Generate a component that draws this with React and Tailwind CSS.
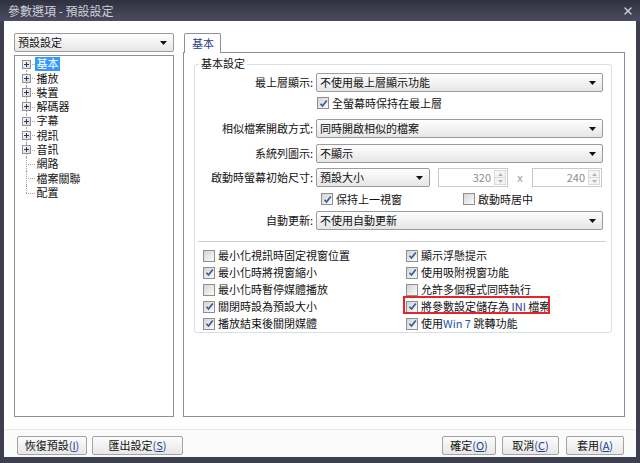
import { X } from 'lucide-react';

const treeItems = [
  { label: '基本', plus: true, selected: true },
  { label: '播放', plus: true },
  { label: '裝置', plus: true },
  { label: '解碼器', plus: true },
  { label: '字幕', plus: true },
  { label: '視訊', plus: true },
  { label: '音訊', plus: true },
  { label: '網路' },
  { label: '檔案關聯' },
  { label: '配置' },
];

const leftChecks = [
  { label: '最小化視訊時固定視窗位置', checked: false },
  { label: '最小化時將視窗縮小', checked: true },
  { label: '最小化時暫停媒體播放', checked: false },
  { label: '關閉時設為預設大小', checked: true },
  { label: '播放結束後關閉媒體', checked: true },
];

function Arrow() {
  return (
    <svg width="7" height="4" viewBox="0 0 7 4" className="shrink-0">
      <polygon points="0,0 7,0 3.5,4" fill="#111" />
    </svg>
  );
}

function Dropdown({ text, className = '' }) {
  return (
    <div className={`h-[19px] border border-[#9b9b9b] rounded-[2px] bg-linear-to-b from-[#fefefe] to-[#e6e6e6] flex items-center justify-between pl-[3px] pr-[6px] ${className}`}>
      <span className="leading-none">{text}</span>
      <Arrow />
    </div>
  );
}

function Checkbox({ checked }) {
  return (
    <span className="w-[12px] h-[12px] shrink-0 border border-[#8e8f8f] bg-linear-to-br from-[#d4d4d4] to-[#fbfbfb] flex items-center justify-center">
      {checked && (
        <svg width="9" height="9" viewBox="0 0 9 9">
          <path d="M1.5 4.8 L3.5 7 L7.8 1.5" fill="none" stroke="#3a5a96" strokeWidth="1.7" />
        </svg>
      )}
    </span>
  );
}

function Check({ checked, children, className = '' }) {
  return (
    <div className={`flex items-center gap-[3px] ${className}`}>
      <Checkbox checked={checked} />
      <span className="leading-none whitespace-nowrap">{children}</span>
    </div>
  );
}

function SpinBox({ value }) {
  return (
    <div className="w-[70px] h-[19px] border border-[#c9c9c9] bg-white flex items-stretch">
      <span className="flex-1 text-right pr-[3px] text-[#8c8c8c] leading-[17px]">{value}</span>
      <div className="w-[12px] flex flex-col my-[1px] mr-[1px]">
        <div className="flex-1 border border-[#dadada] bg-[#f4f4f4] flex items-center justify-center">
          <svg width="5" height="3" viewBox="0 0 5 3"><polygon points="0,3 5,3 2.5,0" fill="#b5b5b5" /></svg>
        </div>
        <div className="flex-1 border border-t-0 border-[#dadada] bg-[#f4f4f4] flex items-center justify-center">
          <svg width="5" height="3" viewBox="0 0 5 3"><polygon points="0,0 5,0 2.5,3" fill="#b5b5b5" /></svg>
        </div>
      </div>
    </div>
  );
}

function Row({ label, children, className = '' }) {
  return (
    <div className={`flex items-center ${className}`}>
      <span className="w-[118px] text-right leading-none whitespace-nowrap">{label}</span>
      <div className="ml-[3px] flex-1 flex items-center">{children}</div>
    </div>
  );
}

function Button({ label, mn, className = '' }) {
  return (
    <button className={`h-[19px] border border-[#a3a3a3] rounded-[2px] bg-linear-to-b from-[#fcfcfc] to-[#e7e7e7] flex items-center justify-center leading-none ${className}`}>
      {label}
      <span className="text-[#1f3f8a]">
        (<span className="underline">{mn}</span>)
      </span>
    </button>
  );
}

function TreeRow({ item, index, last }) {
  return (
    <div className="h-[14.27px] flex items-center pl-[5px]">
      <div className="relative w-[15px] h-full">
        <div
          className={`absolute left-[6px] border-l border-dotted border-[#a5a5a5] ${
            index === 0 ? 'top-1/2 bottom-0' : last ? 'top-0 h-1/2' : 'top-0 bottom-0'
          }`}
        />
        <div className="absolute left-[6px] right-0 top-1/2 border-t border-dotted border-[#a5a5a5]" />
        {item.plus && (
          <div className="absolute left-[2px] top-[2.5px] w-[9px] h-[9px] border border-[#929292] bg-linear-to-br from-[#f8f8f8] to-[#d9d9d9] flex items-center justify-center">
            <svg width="5" height="5" viewBox="0 0 5 5">
              <path d="M0 2.5 H5 M2.5 0 V5" stroke="#1f3a70" strokeWidth="1" />
            </svg>
          </div>
        )}
      </div>
      <span
        className={`h-[13.5px] leading-[13.5px] px-[1.5px] whitespace-nowrap ${
          item.selected ? 'bg-[#3399ff] text-white' : 'text-[#111]'
        }`}
      >
        {item.label}
      </span>
    </div>
  );
}

export default function App() {
  return (
    <div className="w-[640px] h-[463px] flex flex-col bg-[#3d3f4e] text-[11px] text-[#111] font-['Noto_Sans_CJK_TC','Noto_Sans',sans-serif] select-none">
      {/* title bar */}
      <div className="h-[21px] shrink-0 flex items-center justify-between pl-[8px] pr-[6px] bg-linear-to-b from-[#2f3140] to-[#4b4d5f]">
        <span className="text-[12px] text-[#cfd0d8] leading-none">參數選項 - 預設設定</span>
        <X size={12} strokeWidth={3} className="text-[#c8c9d0]" />
      </div>

      {/* client */}
      <div className="flex-1 mx-[4px] mb-[6px] bg-white flex flex-col">
        <div className="flex pt-[12px] h-[396px]">
          {/* left column */}
          <div className="ml-[10px] w-[160px] flex flex-col">
            <Dropdown text="預設設定" />
            <div className="mt-[3px] flex-1 border border-[#8d9097] bg-white pt-[1px]">
              {treeItems.map((item, i) => (
                <TreeRow key={item.label} item={item} index={i} last={i === treeItems.length - 1} />
              ))}
            </div>
          </div>

          {/* right column */}
          <div className="ml-[9px] w-[442px] flex flex-col">
            <div className="flex">
              <div className="relative z-10 ml-[1px] -mb-px w-[37px] h-[20px] border border-b-0 border-[#8d9097] rounded-t-[2px] bg-white flex items-center pl-[7px] text-[#1f3f8a] leading-none">
                基本
              </div>
            </div>
            <div className="flex-1 border border-[#8d9097] bg-white">
              {/* group box */}
              <div className="relative mt-[11px] ml-[10px] w-[418px] h-[269px] border border-[#d5dfe5] rounded-[3px]">
                <span className="absolute -top-[7px] left-[4px] px-[2px] bg-white leading-none">基本設定</span>
                <div className="flex flex-col pt-[8px] pr-[8px]">
                  <Row label="最上層顯示:">
                    <Dropdown text="不使用最上層顯示功能" className="flex-1" />
                  </Row>
                  <div className="mt-[3px] h-[16px] flex items-center pl-[122px]">
                    <Check checked>全螢幕時保持在最上層</Check>
                  </div>
                  <Row label="相似檔案開啟方式:" className="mt-[8px]">
                    <Dropdown text="同時開啟相似的檔案" className="flex-1" />
                  </Row>
                  <Row label="系統列圖示:" className="mt-[6px]">
                    <Dropdown text="不顯示" className="flex-1" />
                  </Row>
                  <Row label="啟動時螢幕初始尺寸:" className="mt-[5px]">
                    <Dropdown text="預設大小" className="w-[114px]" />
                    <div className="ml-[8px]">
                      <SpinBox value="320" />
                    </div>
                    <span className="w-[24px] text-center text-[#9a9a9a] leading-none">x</span>
                    <SpinBox value="240" />
                  </Row>
                  <div className="mt-[4px] h-[16px] flex items-center pl-[126px]">
                    <Check checked className="w-[142px]">保持上一視窗</Check>
                    <Check checked={false}>啟動時居中</Check>
                  </div>
                  <Row label="自動更新:" className="mt-[4px]">
                    <Dropdown text="不使用自動更新" className="flex-1" />
                  </Row>
                  <div className="mt-[11px] ml-[3px] mr-[-3px] h-px bg-[#cfcfcf]" />
                  <div className="mt-[5px] pl-[8px] grid grid-cols-[203px_1fr]">
                    <div className="flex flex-col">
                      {leftChecks.map((c) => (
                        <Check key={c.label} checked={c.checked} className="h-[17px]">
                          {c.label}
                        </Check>
                      ))}
                    </div>
                    <div className="flex flex-col">
                      <Check checked className="h-[17px]">顯示浮懸提示</Check>
                      <Check checked className="h-[17px]">使用吸附視窗功能</Check>
                      <Check checked={false} className="h-[17px]">允許多個程式同時執行</Check>
                      <div className="relative h-[17px] flex items-center">
                        <Check checked>
                          將參數設定儲存為 <span className="text-[#1f3a80]">INI</span> 檔案
                        </Check>
                        <div className="absolute -left-[3px] -top-[2px] w-[147px] h-[18px] border-2 border-[#e3262b]" />
                      </div>
                      <Check checked className="h-[17px]">
                        使用<span className="text-[#1e56b0]">Win 7</span> 跳轉功能
                      </Check>
                    </div>
                  </div>
                </div>
              </div>
            </div>
          </div>
        </div>

        {/* footer */}
        <div className="flex-1 mt-[12px] border-t border-[#e8e8e8] bg-[#fbfbfb] flex items-start pt-[6px] px-[13px]">
          <Button label="恢復預設" mn="I" className="w-[70px]" />
          <Button label="匯出設定" mn="S" className="ml-[5px] w-[91px]" />
          <div className="flex-1" />
          <Button label="確定" mn="O" className="w-[54px]" />
          <Button label="取消" mn="C" className="ml-[6px] w-[57px]" />
          <Button label="套用" mn="A" className="ml-[7px] w-[58px] mr-[-1px]" />
        </div>
      </div>
    </div>
  );
}
